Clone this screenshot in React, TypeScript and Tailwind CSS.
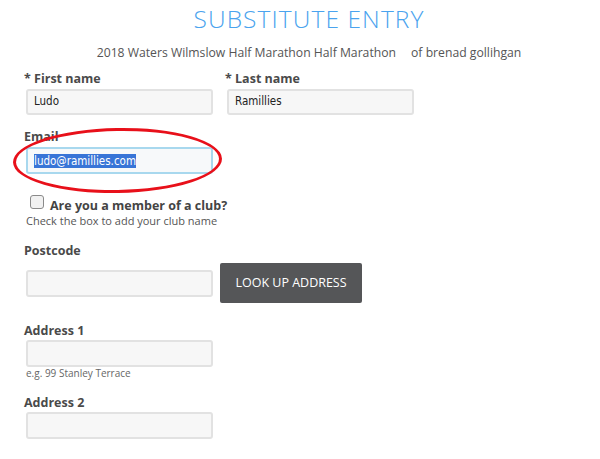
import React from "react";

const Label = ({ children, className = "" }: { children: React.ReactNode; className?: string }) => (
  <p className={`text-[12.5px] font-bold text-[#4a4a4a] leading-[16px] ${className}`}>{children}</p>
);

const Field = ({ value = "", className = "" }: { value?: string; className?: string }) => (
  <div
    className={`w-[187px] h-[26px] rounded-[3px] border-2 border-[#e2e2e2] bg-[#f7f7f7] flex items-center px-[6px] text-[11.5px] text-[#222] font-['DejaVu_Sans_Condensed','Liberation_Sans',sans-serif] ${className}`}
  >
    {value}
  </div>
);

export default function App() {
  return (
    <div className="w-[600px] h-[459px] overflow-hidden bg-white font-['Open_Sans',sans-serif] relative">
      <h1 className="text-center text-[24.5px] font-light text-[#4aa3ee] tracking-[1.1px] pt-[5px] leading-[28px] pl-[18px]">
        SUBSTITUTE ENTRY
      </h1>
      <p className="text-center text-[12.2px] text-[#555] mt-[12px] leading-[16px] pl-[18px]">
        2018 Waters Wilmslow Half Marathon Half Marathon
        <span className="ml-[15px]">of brenad gollihgan</span>
      </p>

      <div className="px-[24px] mt-[10px]">
        <div className="flex gap-[12px]">
          <div>
            <Label>* First name</Label>
            <Field value="Ludo" className="mt-[2px] ml-[2px] h-[25px]" />
          </div>
          <div>
            <Label>* Last name</Label>
            <Field value="Ramillies" className="mt-[2px] ml-[2px] h-[25px]" />
          </div>
        </div>

        <div className="relative mt-[14px]">
          <Label>Email</Label>
          <div className="mt-[2px] ml-[2px] w-[187px] h-[27px] rounded-[3px] border-2 border-[#a8d8ee] bg-[#f7f9fa] flex items-center px-[6px]">
            <span className="bg-[#3875d7] text-white text-[11.5px] leading-[14px] font-['DejaVu_Sans_Condensed','Liberation_Sans',sans-serif]">
              ludo@ramillies.com
            </span>
          </div>
          <div className="absolute left-[-11px] top-[-1px] w-[209px] h-[65px] rounded-[50%] border-[3px] border-[#e8101a] rotate-[-1deg]" />
        </div>

        <div className="flex items-start mt-[21px] ml-[6px] gap-[6px]">
          <div className="w-[14px] h-[14px] rounded-[3px] border border-[#8a8a8a] bg-[#f1f1f1]" />
          <span className="text-[12.5px] font-bold text-[#444] mt-[2px] leading-[17px]">Are you a member of a club?</span>
        </div>
        <p className="text-[11px] text-[#555] leading-[13px] ml-[2px]">Check the box to add your club name</p>

        <Label className="mt-[16px]">Postcode</Label>
        <div className="flex items-center gap-[7px] ml-[2px] mt-[4px]">
          <Field className="h-[27px]" />
          <div className="w-[142px] h-[40px] bg-[#555658] rounded-[2px] flex items-center justify-center text-white text-[12.5px]">
            LOOK UP ADDRESS
          </div>
        </div>

        <Label className="mt-[20px]">Address 1</Label>
        <Field className="mt-[1px] ml-[2px] h-[27px]" />
        <p className="text-[10px] text-[#666] leading-[12px] ml-[2px]">e.g. 99 Stanley Terrace</p>

        <Label className="mt-[16px]">Address 2</Label>
        <Field className="mt-[1px] ml-[2px] h-[27px]" />
      </div>
    </div>
  );
}
